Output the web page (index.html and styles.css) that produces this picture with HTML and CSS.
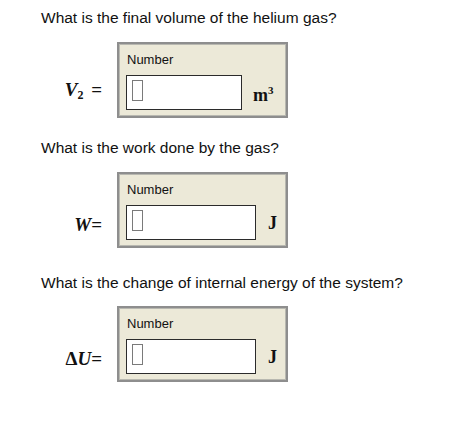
FILE: index.html
```html
<!DOCTYPE html>
<html lang="en">
<head>
  <meta charset="UTF-8" />
  <title>Thermodynamics Questions</title>
  <link rel="stylesheet" href="styles.css">
</head>
<body>
  <div class="question q-volume">
    <p class="prompt">What is the final volume of the helium gas?</p>
    <div class="answer-row">
      <span class="var"><i>V</i><sub>2</sub> =</span>
      <div class="answer-box">
        <div class="box-label">Number</div>
        <div class="field-row">
          <div class="field field-short"><span class="caret"></span></div>
          <span class="unit unit-m3">m<sup>3</sup></span>
        </div>
      </div>
    </div>
  </div>

  <div class="question q-work">
    <p class="prompt">What is the work done by the gas?</p>
    <div class="answer-row">
      <span class="var"><i>W</i>=</span>
      <div class="answer-box">
        <div class="box-label">Number</div>
        <div class="field-row">
          <div class="field"><span class="caret"></span></div>
          <span class="unit">J</span>
        </div>
      </div>
    </div>
  </div>

  <div class="question q-energy">
    <p class="prompt">What is the change of internal energy of the system?</p>
    <div class="answer-row">
      <span class="var">&Delta;<i>U</i>=</span>
      <div class="answer-box">
        <div class="box-label">Number</div>
        <div class="field-row">
          <div class="field"><span class="caret"></span></div>
          <span class="unit">J</span>
        </div>
      </div>
    </div>
  </div>
</body>
</html>
```

FILE: styles.css
```css
* {
  margin: 0;
  padding: 0;
  box-sizing: border-box;
}

body {
  background: #fff;
  color: #111;
  font-family: "Liberation Sans", Arial, sans-serif;
  padding: 9px 0 0 41px;
}

.prompt {
  font-size: 15.5px;
  line-height: 18px;
}

.q-volume .prompt { margin-bottom: 15px; }
.q-work { margin-top: 21px; }
.q-work .prompt { margin-bottom: 15px; }
.q-energy { margin-top: 26px; }
.q-energy .prompt { margin-bottom: 14px; }

.answer-row {
  display: flex;
  align-items: flex-end;
}

/* variable name to the left of the box, right aligned */
.var {
  width: 61px;
  margin-right: 15px;
  padding-bottom: 12px;
  text-align: right;
  font-family: "Liberation Serif", "Times New Roman", serif;
  font-size: 19px;
  line-height: 22px;
  font-weight: bold;
  white-space: nowrap;
}

.var i {
  font-style: italic;
}

.var sub {
  font-size: 12px;
  vertical-align: -3px;
  margin-right: 3px;
}

.answer-box {
  width: 171px;
  background: #ece9d8;
  border: 2px solid #8e8e8e;
  box-shadow: inset 0 0 0 1px #b8b8b0;
  padding: 8px 6px 6px 7px;
}

.box-label {
  font-size: 13px;
  line-height: 15px;
  color: #111;
  margin-left: 1px;
  margin-bottom: 8px;
}

.field-row {
  display: flex;
  align-items: center;
}

.field {
  width: 130px;
  height: 35px;
  background: #fff;
  border: 1px solid #2b2b2b;
  padding: 4px 0 0 5px;
}

.field-short {
  width: 116px;
}

.caret {
  display: block;
  width: 11px;
  height: 21px;
  border: 1px solid #7a7a7a;
}

.unit {
  margin-left: 12px;
  font-family: "Liberation Serif", "Times New Roman", serif;
  font-weight: bold;
  font-size: 18px;
  line-height: 20px;
}

.unit-m3 {
  margin-left: 11px;
}

.unit sup {
  font-size: 11px;
  vertical-align: 7px;
}
```
